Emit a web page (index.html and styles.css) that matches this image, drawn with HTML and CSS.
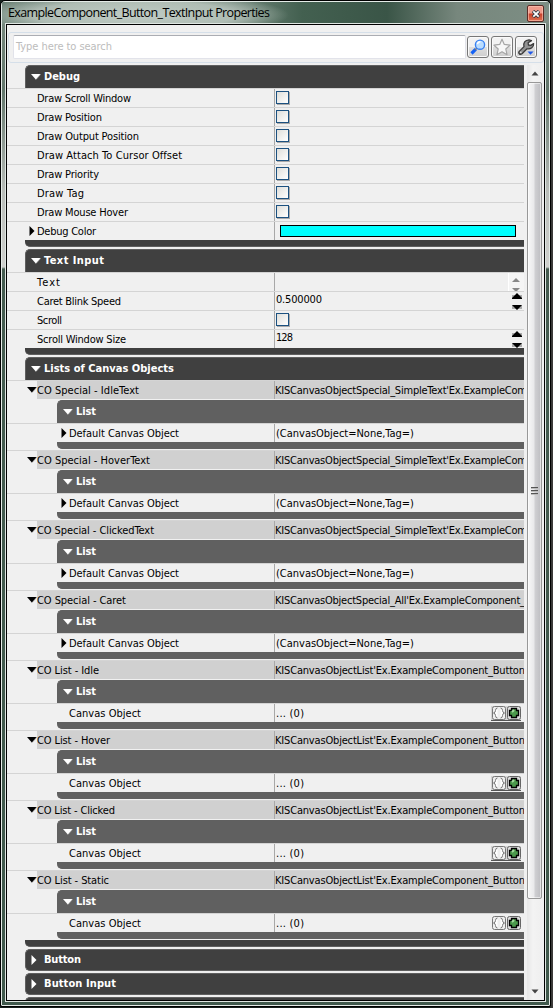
FILE: index.html
```html
<!DOCTYPE html>
<html lang="en">
<head>
<meta charset="utf-8">
<title>ExampleComponent_Button_TextInput Properties</title>
<link rel="stylesheet" href="styles.css">
</head>
<body>
<div class="window">
  <div class="titlebar">
    <span class="title" data-w="262">ExampleComponent_Button_TextInput Properties</span>
    <button class="close" aria-label="Close"><svg width="8" height="8" viewBox="0 0 8 8"><path d="M1 1L7 7M7 1L1 7" stroke="#333b44" stroke-width="3.4"/><path d="M1.3 1.3L6.7 6.7M6.7 1.3L1.3 6.7" stroke="#fff" stroke-width="1.7"/></svg></button>
  </div>
  <div class="client">
    <div class="search">
      <div class="input"><span data-w="96">Type here to search</span></div>
      <button class="tool" aria-label="Search"><svg width="18" height="18" viewBox="0 0 18 18"><path d="M2.5 15.5L6.8 11.2" stroke="#1462f5" stroke-width="3.2"/><path d="M6 12L8 10" stroke="#777" stroke-width="1.5"/><circle cx="11" cy="6.7" r="4.6" fill="#b9dcff" stroke="#3a82f2" stroke-width="1.4"/><path d="M8.4 6.2A3 3 0 0 1 11.4 3.8" stroke="#fff" stroke-width="1.5" fill="none"/></svg></button>
      <button class="tool" aria-label="Favorites"><svg width="18" height="18" viewBox="0 0 18 18"><path d="M9 1.3L11.3 6.4L17 7.2L12.8 11L14 16.7L9 13.8L4 16.7L5.2 11L1 7.2L6.7 6.4Z" fill="#f7f7f7" stroke="#a5a5a5" stroke-width="1.2" stroke-linejoin="round"/></svg></button>
      <button class="tool" aria-label="Options"><svg width="18" height="18" viewBox="0 0 18 18"><path d="M2 13.6L7 8.6C6 5 8 2 12 1.8L14.5 2.6L11.2 4.6L11.4 7L13.8 7.4L16.6 5.6C17 9 13.5 11.6 10 10.8L5 15.8C3 17 1 15.5 2 13.6Z" fill="#929292" stroke="#3b3b3b" stroke-width="1.3" stroke-linejoin="round"/><circle cx="3.8" cy="14.2" r=".8" fill="#eee"/><path d="M10.5 13.6H16.6L13.5 16.7Z" fill="#2058e8"/></svg></button>
    </div>
    <div class="content">
      <div class="tree" id="tree"></div>
      <div class="scrollbar">
        <div class="arrow"><svg width="8" height="5"><path d="M0.5 4.5L4 .5L7.5 4.5Z" fill="#444"/></svg></div>
        <div class="thumb"><i></i><i></i><i></i></div>
        <div class="arrow bottom"><svg width="8" height="5"><path d="M0.5 .5L4 4.5L7.5 .5Z" fill="#444"/></svg></div>
      </div>
    </div>
  </div>
</div>
<script src="app.js"></script>
</body>
</html>
```
FILE: styles.css
```css
* { box-sizing: border-box; }
html, body { margin: 0; height: 100%; overflow: hidden; }
body {
  background: linear-gradient(90deg, #16201c 548px, #3c3b3a 552px);
  font: 11px/18px "DejaVu Sans Condensed", "DejaVu Sans", sans-serif;
  font-stretch: condensed;
  color: #000;
}
button { padding: 0; }
svg { display: block; }
.window {
  width: 551px;
  height: 1007px;
  border: 1px solid #000;
  border-radius: 5px 5px 2px 2px;
  padding: 0 5px 5px;
  display: flex;
  flex-direction: column;
  box-shadow: inset 0 0 0 1px #e4ebe7;
  background: linear-gradient(180deg, #7b8c82 0, #62766b 90px, #b9bdb9 190px, #cfd0cd 266px, #455c50 268px, #40594c 100%);
}
.titlebar {
  height: 22px;
  margin: 1px -4px 0;
  padding: 0 5px 0 6px;
  display: flex;
  justify-content: space-between;
  flex: none;
  background:
    radial-gradient(ellipse 155px 22px at 132px 13px, rgba(196,207,200,.95) 0, rgba(186,198,190,.85) 65%, rgba(150,168,157,0) 100%),
    linear-gradient(90deg, #6e8378 0, #71877b 230px, #436050 300px, #3a5547 385px, #77877d 455px, #7d8e84 100%);
}
.title { font: 12.5px/22px "Open Sans", "Noto Sans", sans-serif; white-space: nowrap; }
.close {
  width: 17px;
  height: 17px;
  margin-top: 3px;
  border: 1px solid #5c2c27;
  border-radius: 2px;
  display: grid;
  place-items: center;
  background: linear-gradient(#ef9b8b 0 48%, #c8402b 52%, #dc7050);
  box-shadow: inset 0 0 0 1px rgba(255,200,185,.6);
}
.client {
  flex: 1;
  min-height: 0;
  border: 1px solid #000;
  outline: 1px solid #dfe6e2;
  background: #f0f0f0;
  display: flex;
  flex-direction: column;
}
.search {
  flex: none;
  height: 31px;
  margin: 7px 0 2px 1px;
  padding: 2px 4px 3px 4px;
  border: 1px solid #d5dfe9;
  border-radius: 3px;
  display: flex;
}
.input {
  width: 453px;
  height: 24px;
  margin-right: 1px;
  padding: 1px 2px;
  background: #fff;
  border: 1px solid #e2e3ea;
  border-top-color: #abadb3;
  border-radius: 2px;
  color: #bcbcbc;
  line-height: 20px;
}
.tool {
  width: 22px;
  height: 22px;
  margin: 1px 2px 0 0;
  flex: none;
  border: 1px solid #777;
  border-radius: 3px;
  background: linear-gradient(#f2f2f2 0 48%, #dedede 52%, #cecece);
  box-shadow: inset 0 0 0 1px #fafafa;
  display: grid;
  place-items: center;
}
.content { flex: 1; min-height: 0; display: flex; gap: 3px; }
.tree { width: 517px; overflow: hidden; }
.group { margin: 0 0 2px 18px; }
.group > .head, .group > .foot { background: #404040; }
.head {
  height: 23px;
  border-top: 1px solid #606060;
  border-left: 1px solid #606060;
  border-radius: 5px 0 0 0;
  color: #fff;
  font-weight: bold;
  line-height: 20px;
  display: flex;
  align-items: center;
  padding-left: 5px;
}
.head .mark { width: 13px; }
.closed > .head { height: 22px; border-bottom: 1px solid #606060; border-radius: 5px 0 0 5px; }
.foot { height: 7px; border-bottom: 1px solid #606060; border-radius: 0 0 0 5px; }
.row {
  height: 19px;
  border-top: 1px solid #d4d4d4;
  display: flex;
  margin-left: -18px;
}
.name { width: 267px; flex: none; padding-left: 22px; display: flex; align-items: center; white-space: nowrap; }
.name .mark { width: 8px; flex: none; }
.label { height: 18px; line-height: 20px; }
.value {
  flex: 1;
  min-width: 0;
  border-left: 1px solid #a8a8a8;
  padding-left: 1px;
  display: flex;
  align-items: center;
  overflow: hidden;
  white-space: nowrap;
  line-height: 20px;
}
.value > span { height: 18px; }
.object { height: 70px; }
.object > .row > .name { padding-left: 20px; }
.object > .row > .name .mark { width: 10px; }
.object > .row > .name .label { flex: 1; background: #d0d0d0; }
.object > .row > .value { background: #d0d0d0; padding-left: 0; }
.list { margin: 1px 0 0 32px; }
.list > .head, .list > .foot { background: #606060; }
.list > .row { margin-left: -50px; }
.list > .row > .name { padding-left: 54px; }
.check {
  width: 13px;
  height: 13px;
  border: 1px solid #1c5180;
  background: linear-gradient(135deg, #dededa, #fff);
  box-shadow: 1px 1px 0 #aaa;
  margin-top: -1px;
}
.swatch { width: 236px; height: 12px; border: 1px solid #000; background: #0ff; margin-left: 4px; }
.value > .number { align-self: flex-start; line-height: 16px; }
.spin { margin-left: auto; margin-right: 2px; }
.textspin { margin-left: auto; width: 16px; height: 18px; background: #f5f5f5; border-left: 1px solid #fff; padding: 5px 0 0 2px; }
.actions { margin-left: auto; margin-right: 3px; display: flex; gap: 1px; background: #d5d5d5; border-bottom: 1px solid #555; padding: 0 0 0 1px; }
.plain .actions { background: none; border-color: transparent; }
.scrollbar { width: 15px; display: flex; flex-direction: column; background: linear-gradient(90deg, #e7e7e7, #f3f3f3 40%, #efefef); }
.arrow { height: 17px; flex: none; display: grid; place-items: center; }
.thumb {
  height: 817px;
  border: 1px solid #989898;
  border-radius: 2px;
  background: linear-gradient(90deg, #f7f7f7 0, #e9e9eb 45%, #cfcfd2 55%, #bdbdc1 100%);
  box-shadow: inset 0 0 0 1px rgba(255,255,255,.55);
  display: flex;
  flex-direction: column;
  align-items: center;
  justify-content: center;
  gap: 1px;
}
.thumb i { width: 7px; height: 2px; background: #555; border-bottom: 1px solid #bbb; }
.arrow.bottom { margin-top: auto; }
```
FILE: app.js
```js
const down = c => `<svg width="10" height="6"><path d="M5 5.5L9.5 .5" stroke="#999"/><path d="M0 0H9.5L4.8 5.5Z" fill="${c}"/></svg>`;
const right = c => `<svg width="6" height="10"><path d="M0.5 0L5.5 5L0.5 10Z" fill="${c}"/></svg>`;
const text = (t, w, cls = '') => `<span class="${cls}" data-w="${w}">${t}</span>`;
const check = '<div class="check"></div>';
const spin = '<svg class="spin" width="10" height="17"><path d="M0 2H10V6H0ZM0 12H10V16H0Z" fill="#aaa"/><path d="M0 5L5 0L10 5V6H0ZM0 12H10L5 17Z" fill="#000"/></svg>';
const textSpin = '<div class="textspin"><svg width="10" height="13"><path d="M1 4L5 0L9 4Z" fill="#888"/><path d="M1 10H9L6 13H4Z" fill="#888"/></svg></div>';
const actions = `<div class="actions">
<svg width="14" height="14"><rect x=".5" y=".5" width="13" height="13" rx="2" fill="#eee" stroke="#777"/><path d="M5.5 2Q3.5 2 3.5 4.5Q3.5 6.5 1.5 7Q3.5 7.5 3.5 9.5Q3.5 12 5.5 12M8.5 2Q10.5 2 10.5 4.5Q10.5 6.5 12.5 7Q10.5 7.5 10.5 9.5Q10.5 12 8.5 12" fill="#fff" stroke="#777"/></svg>
<svg width="14" height="14"><rect x=".5" y=".5" width="13" height="13" rx="2" fill="#ddd" stroke="#666"/><path d="M4.5 2.5H9.5V4.5H11.5V9.5H9.5V11.5H4.5V9.5H2.5V4.5H4.5Z" fill="#4c9a4c" stroke="#000" stroke-width="1.3"/><path d="M5 6L7 4" stroke="#a5dba0" stroke-width="2"/></svg></div>`;

const row = (name, w, value, mark = '', cls = '') =>
  `<div class="row ${cls}"><div class="name"><span class="mark">${mark}</span><div class="label">${text(name, w)}</div></div><div class="value">${value}</div></div>`;
const head = (name, w, mark) => `<div class="head"><span class="mark">${mark}</span>${text(name, w)}</div>`;
const group = (name, w, rows) => rows
  ? `<div class="group">${head(name, w, down('#fff'))}${rows.join('')}<div class="foot"></div></div>`
  : `<div class="group closed">${head(name, w, right('#fff'))}</div>`;
const object = (name, w, value, vw, inner) =>
  `<div class="object">${row(name, w, text(value, vw), down('#000'))}<div class="list">${head('List', 20, down('#fff'))}${inner}<div class="foot"></div></div></div>`;

const special = row('Default Canvas Object', 110, text('(CanvasObject=None,Tag=)', 138), right('#000'));
const list = row('Canvas Object', 72, text('... (0)', 28) + actions);
const lastList = row('Canvas Object', 72, text('... (0)', 28) + actions, '', 'plain');
const simple = "KISCanvasObjectSpecial_SimpleText'Ex.ExampleCom";
const listRef = "KISCanvasObjectList'Ex.ExampleComponent_Button";

document.getElementById('tree').innerHTML = [
  group('Debug', 36, [
    ...[['Draw Scroll Window', 94], ['Draw Position', 65], ['Draw Output Position', 102],
      ['Draw Attach To Cursor Offset', 145], ['Draw Priority', 62], ['Draw Tag', 47],
      ['Draw Mouse Hover', 91]].map(([n, w]) => row(n, w, check)),
    row('Debug Color', 59, '<div class="swatch"></div>', right('#000'))
  ]),
  group('Text Input', 60, [
    row('Text', 23, textSpin),
    row('Caret Blink Speed', 84, text('0.500000', 46, 'number') + spin),
    row('Scroll', 25, check),
    row('Scroll Window Size', 89, text('128', 17, 'number') + spin)
  ]),
  group('Lists of Canvas Objects', 130, [
    object('CO Special - IdleText', 102, simple, 252, special),
    object('CO Special - HoverText', 113, simple, 252, special),
    object('CO Special - ClickedText', 117, simple, 252, special),
    object('CO Special - Caret', 89, "KISCanvasObjectSpecial_All'Ex.ExampleComponent_", 250, special),
    object('CO List - Idle', 62, listRef, 250, list),
    object('CO List - Hover', 73, listRef, 250, list),
    object('CO List - Clicked', 78, listRef, 250, list),
    object('CO List - Static', 72, listRef, 250, lastList)
  ]),
  group('Button', 37),
  group('Button Input', 72),
  '<div class="group closed"><div class="head"></div></div>'
].join('');

// Track each label to its design width.
document.querySelectorAll('[data-w]').forEach(el => {
  const n = el.textContent.length;
  const natural = el.getBoundingClientRect().width;
  el.style.letterSpacing = ((el.dataset.w - natural) / (n - 1)).toFixed(3) + 'px';
});
```
